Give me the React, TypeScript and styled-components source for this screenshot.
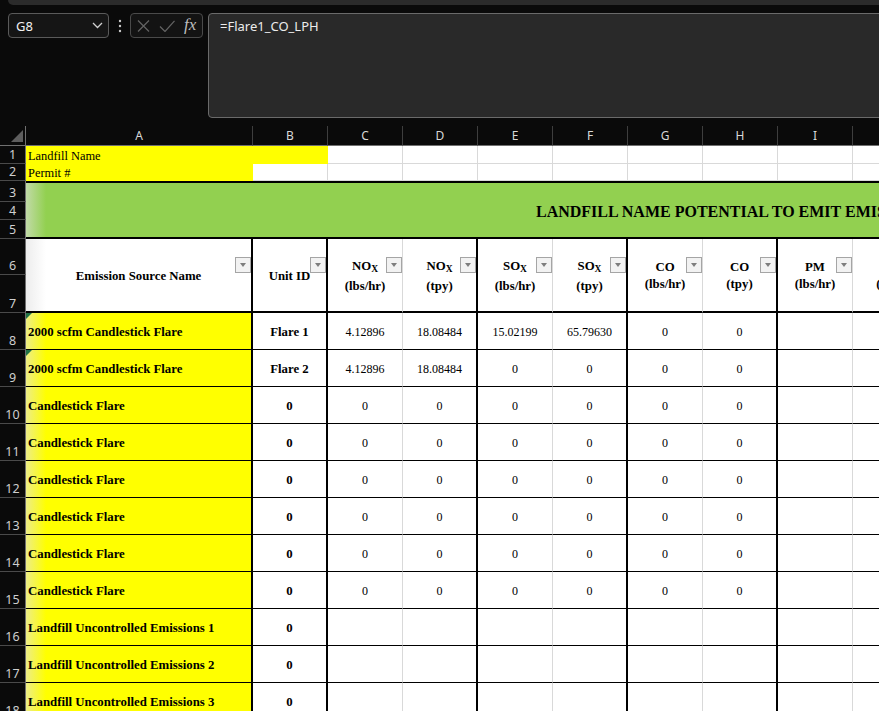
import React from 'react';
import styled, { createGlobalStyle, css } from 'styled-components';

type Edge = 'thick' | 'thin' | 'grid' | 'none';
const edge = (e: Edge = 'none') =>
  e === 'thick'
    ? '2px solid #000'
    : e === 'thin'
    ? '1px solid #000'
    : e === 'grid'
    ? '1px solid #d9d9d9'
    : 'none';

const SERIF = `"Liberation Serif", "Times New Roman", serif`;
const UI = `"Noto Sans", "Open Sans", sans-serif`;

const GlobalStyle = createGlobalStyle`
  * { box-sizing: border-box; }
  html, body { margin: 0; padding: 0; background: #0a0a0a; overflow: hidden; }
  #root { width: 879px; height: 711px; overflow: hidden; background: #0a0a0a; }
`;

const Page = styled.div`
  width: 879px;
  height: 711px;
  display: flex;
  flex-direction: column;
  overflow: hidden;
  background: #0a0a0a;
`;

const TopStrip = styled.div`
  flex: none;
  height: 5px;
  margin-left: 8px;
  background: #2b2b2b;
  border-bottom-left-radius: 5px;
`;

const FormulaBar = styled.div`
  flex: none;
  height: 121px;
  display: flex;
  align-items: flex-start;
  padding: 8px 0 0 8px;
`;

const NameBox = styled.div`
  width: 101px;
  height: 25px;
  border: 1px solid #5a5a5a;
  border-radius: 4px;
  background: #151515;
  display: flex;
  align-items: center;
  justify-content: space-between;
  padding: 0 5px 0 7px;
  font-family: ${UI};
  font-size: 13px;
  color: #f2f2f2;
`;

const DotsBox = styled.div`
  width: 21px;
  height: 25px;
  display: flex;
  align-items: center;
  justify-content: center;
`;

const ButtonGroup = styled.div`
  width: 73px;
  height: 25px;
  border: 1px solid #4a4a4a;
  border-radius: 4px;
  background: #131313;
  display: flex;
  align-items: center;
  padding: 0 0 0 6px;
  gap: 9px;
`;

const FxLabel = styled.span`
  font-family: ${SERIF};
  font-style: italic;
  font-size: 17px;
  line-height: 17px;
  color: #bdbdbd;
  margin-top: -2px;
`;

const FormulaBox = styled.div`
  flex: 1;
  height: 105px;
  margin-left: 5px;
  margin-right: -6px;
  background: #292929;
  border: 1px solid #6a6a6a;
  border-radius: 4px;
  padding: 3px 11px;
  font-family: ${UI};
  font-size: 13px;
  line-height: 18px;
  color: #ececec;
`;

interface PlaceProps {
  $r: number;
  $c: number;
  $rs?: number;
  $cs?: number;
}
const place = css<PlaceProps>`
  grid-row: ${p => p.$r} / span ${p => p.$rs ?? 1};
  grid-column: ${p => p.$c} / span ${p => p.$cs ?? 1};
`;

const Sheet = styled.div`
  flex: none;
  display: grid;
  width: 928px;
  grid-template-columns: 26px 227px repeat(9, 75px);
  grid-template-rows: 20px 18px 17px 21px 18px 19px 36px 38px 37px repeat(10, 37px);
`;

const Corner = styled.div<PlaceProps>`
  ${place}
  border-right: 1px solid #707070;
  border-bottom: 1px solid #707070;
  display: flex;
  align-items: flex-end;
  justify-content: flex-end;
  padding: 0 2px 3px 0;
`;

const ColHead = styled.div<PlaceProps>`
  ${place}
  display: flex;
  align-items: center;
  justify-content: center;
  border-right: 1px solid #3e3e3e;
  border-bottom: 1px solid #707070;
  font-family: ${UI};
  font-size: 12px;
  color: #d8d8d8;
`;

const RowHead = styled.div<PlaceProps>`
  ${place}
  display: flex;
  align-items: flex-end;
  justify-content: center;
  padding-bottom: 1px;
  border-right: 1px solid #707070;
  border-bottom: 1px solid #4a4a4a;
  font-family: ${UI};
  font-size: 12.5px;
  line-height: 14px;
  color: #cfcfcf;
`;

interface CellProps extends PlaceProps {
  $bg?: string;
  $right?: Edge;
  $bottom?: Edge;
  $top?: Edge;
  $align?: 'left' | 'center';
  $bold?: boolean;
  $shade?: boolean;
}

const Cell = styled.div<CellProps>`
  ${place}
  position: relative;
  display: flex;
  align-items: center;
  justify-content: ${p => (p.$align === 'left' ? 'flex-start' : 'center')};
  padding-left: ${p => (p.$align === 'left' ? '2px' : '0')};
  padding-top: 2px;
  background-color: ${p => p.$bg ?? '#ffffff'};
  background-image: ${p =>
    p.$shade
      ? 'linear-gradient(to right, rgba(225,225,225,0.6), rgba(225,225,225,0) 20px)'
      : 'none'};
  border-right: ${p => edge(p.$right)};
  border-bottom: ${p => edge(p.$bottom)};
  border-top: ${p => edge(p.$top)};
  font-family: ${SERIF};
  font-size: ${p => (p.$bold ? '12.8px' : '12px')};
  font-weight: ${p => (p.$bold ? 700 : 400)};
  color: #000;
  white-space: nowrap;
  overflow: hidden;
`;

const TitleCell = styled(Cell)`
  padding-left: 510px;
  padding-top: 3px;
  font-size: 16px;
  font-weight: 700;
`;

const HeadCell = styled(Cell)`
  flex-direction: column;
  padding-top: 2px;
  font-size: 12.8px;
  font-weight: 700;
  line-height: 17px;
`;

const Sub = styled.span`
  font-size: 9.5px;
  vertical-align: -2px;
`;

const Dropdown = styled.span`
  position: absolute;
  top: 18px;
  right: 0;
  width: 16px;
  height: 16px;
  background: #f2f2f2;
  border: 1px solid #a5a5a5;
  &::after {
    content: '';
    position: absolute;
    left: 4px;
    top: 5px;
    border-left: 3.5px solid transparent;
    border-right: 3.5px solid transparent;
    border-top: 4px solid #7d7d7d;
  }
`;

const CommentMark = styled.span`
  position: absolute;
  top: 0;
  left: 0;
  width: 0;
  height: 0;
  border-top: 6px solid #217346;
  border-right: 6px solid transparent;
`;

const COLS = ['A', 'B', 'C', 'D', 'E', 'F', 'G', 'H', 'I', 'J'];
const RIGHT: Edge[] = ['thick', 'thick', 'grid', 'thick', 'grid', 'thick', 'grid', 'thick', 'grid', 'thick'];

const HEADERS: { t: string; sub?: string; u: string }[] = [
  { t: 'NO', sub: 'X', u: '(lbs/hr)' },
  { t: 'NO', sub: 'X', u: '(tpy)' },
  { t: 'SO', sub: 'X', u: '(lbs/hr)' },
  { t: 'SO', sub: 'X', u: '(tpy)' },
  { t: 'CO', u: '(lbs/hr)' },
  { t: 'CO', u: '(tpy)' },
  { t: 'PM', u: '(lbs/hr)' },
  { t: 'PM', u: '(tpy)' },
];

const zeros = ['0', '0', '0', '0', '0', '0'];
const blanks = ['', '', '', '', '', ''];

const DATA: { name: string; unit: string; vals: string[]; note?: boolean }[] = [
  { name: '2000 scfm Candlestick Flare', unit: 'Flare 1', vals: ['4.12896', '18.08484', '15.02199', '65.79630', '0', '0'], note: true },
  { name: '2000 scfm Candlestick Flare', unit: 'Flare 2', vals: ['4.12896', '18.08484', '0', '0', '0', '0'], note: true },
  { name: 'Candlestick Flare', unit: '0', vals: zeros },
  { name: 'Candlestick Flare', unit: '0', vals: zeros },
  { name: 'Candlestick Flare', unit: '0', vals: zeros },
  { name: 'Candlestick Flare', unit: '0', vals: zeros },
  { name: 'Candlestick Flare', unit: '0', vals: zeros },
  { name: 'Candlestick Flare', unit: '0', vals: zeros },
  { name: 'Landfill Uncontrolled Emissions 1', unit: '0', vals: blanks },
  { name: 'Landfill Uncontrolled Emissions 2', unit: '0', vals: blanks },
  { name: 'Landfill Uncontrolled Emissions 3', unit: '0', vals: blanks },
];

const YELLOW = '#ffff00';
const GREEN = '#92d050';

export default function App() {
  return (
    <Page>
      <GlobalStyle />
      <TopStrip />
      <FormulaBar>
        <NameBox>
          <span>G8</span>
          <svg width="11" height="7" viewBox="0 0 11 7">
            <path d="M1 1l4.5 4.5L10 1" fill="none" stroke="#d0d0d0" strokeWidth="1.3" />
          </svg>
        </NameBox>
        <DotsBox>
          <svg width="4" height="14" viewBox="0 0 4 14">
            <circle cx="2" cy="2" r="1.2" fill="#c8c8c8" />
            <circle cx="2" cy="7" r="1.2" fill="#c8c8c8" />
            <circle cx="2" cy="12" r="1.2" fill="#c8c8c8" />
          </svg>
        </DotsBox>
        <ButtonGroup>
          <svg width="13" height="12" viewBox="0 0 13 12">
            <path d="M1 0.5l11 11M12 0.5l-11 11" stroke="#646464" strokeWidth="1.2" fill="none" />
          </svg>
          <svg width="16" height="12" viewBox="0 0 16 12">
            <path d="M1 6.5l5 5L15.5 0.8" stroke="#646464" strokeWidth="1.2" fill="none" />
          </svg>
          <FxLabel>fx</FxLabel>
        </ButtonGroup>
        <FormulaBox>=Flare1_CO_LPH</FormulaBox>
      </FormulaBar>

      <Sheet>
        <Corner $r={1} $c={1}>
          <svg width="12" height="12" viewBox="0 0 12 12">
            <polygon points="12,0 12,12 0,12" fill="#5e5e5e" />
          </svg>
        </Corner>
        {COLS.map((c, i) => (
          <ColHead key={c} $r={1} $c={i + 2}>
            {c}
          </ColHead>
        ))}

        {Array.from({ length: 18 }, (_, i) => (
          <RowHead key={i} $r={i + 2} $c={1}>
            {i + 1}
          </RowHead>
        ))}

        {/* Row 1 */}
        <Cell $r={2} $c={2} $cs={2} $bg={YELLOW} $align="left" style={{ fontSize: '12.4px' }}>
          Landfill Name
        </Cell>
        {COLS.slice(2).map((c, i) => (
          <Cell key={`r1${c}`} $r={2} $c={i + 4} $right="grid" $bottom="grid" />
        ))}

        {/* Row 2 */}
        <Cell $r={3} $c={2} $bg={YELLOW} $align="left" style={{ fontSize: '12.4px' }}>
          Permit #
        </Cell>
        {COLS.slice(1).map((c, i) => (
          <Cell key={`r2${c}`} $r={3} $c={i + 3} $right="grid" $bottom="grid" />
        ))}

        {/* Rows 3-5 title band */}
        <TitleCell $r={4} $rs={3} $c={2} $cs={10} $bg={GREEN} $top="thick" $bottom="thick" $align="left" $shade>
          LANDFILL NAME POTENTIAL TO EMIT EMISSIONS SUMMARY
        </TitleCell>

        {/* Rows 6-7 headers */}
        <HeadCell $r={7} $rs={2} $c={2} $right="thick" $bottom="thick" $shade>
          Emission Source Name
          <Dropdown />
        </HeadCell>
        <HeadCell $r={7} $rs={2} $c={3} $right="thick" $bottom="thick">
          Unit ID
          <Dropdown />
        </HeadCell>
        {HEADERS.map((h, i) => (
          <HeadCell key={`h${i}`} $r={7} $rs={2} $c={i + 4} $right={RIGHT[i + 2]} $bottom="thick">
            <span>
              {h.t}
              {h.sub && <Sub>{h.sub}</Sub>}
            </span>
            <span>{h.u}</span>
            <Dropdown />
          </HeadCell>
        ))}

        {/* Data rows 8-18 */}
        {DATA.map((d, ri) => {
          const r = ri + 9;
          return (
            <React.Fragment key={`d${ri}`}>
              <Cell $r={r} $c={2} $bg={YELLOW} $right="thick" $bottom="thin" $align="left" $bold $shade>
                {d.note && <CommentMark />}
                {d.name}
              </Cell>
              <Cell $r={r} $c={3} $right="thick" $bottom="thin" $bold>
                {d.unit}
              </Cell>
              {d.vals.map((v, vi) => (
                <Cell key={vi} $r={r} $c={vi + 4} $right={RIGHT[vi + 2]} $bottom="thin">
                  {v}
                </Cell>
              ))}
              <Cell $r={r} $c={10} $right={RIGHT[8]} $bottom="thin" />
              <Cell $r={r} $c={11} $right={RIGHT[9]} $bottom="thin" />
            </React.Fragment>
          );
        })}
      </Sheet>
    </Page>
  );
}
